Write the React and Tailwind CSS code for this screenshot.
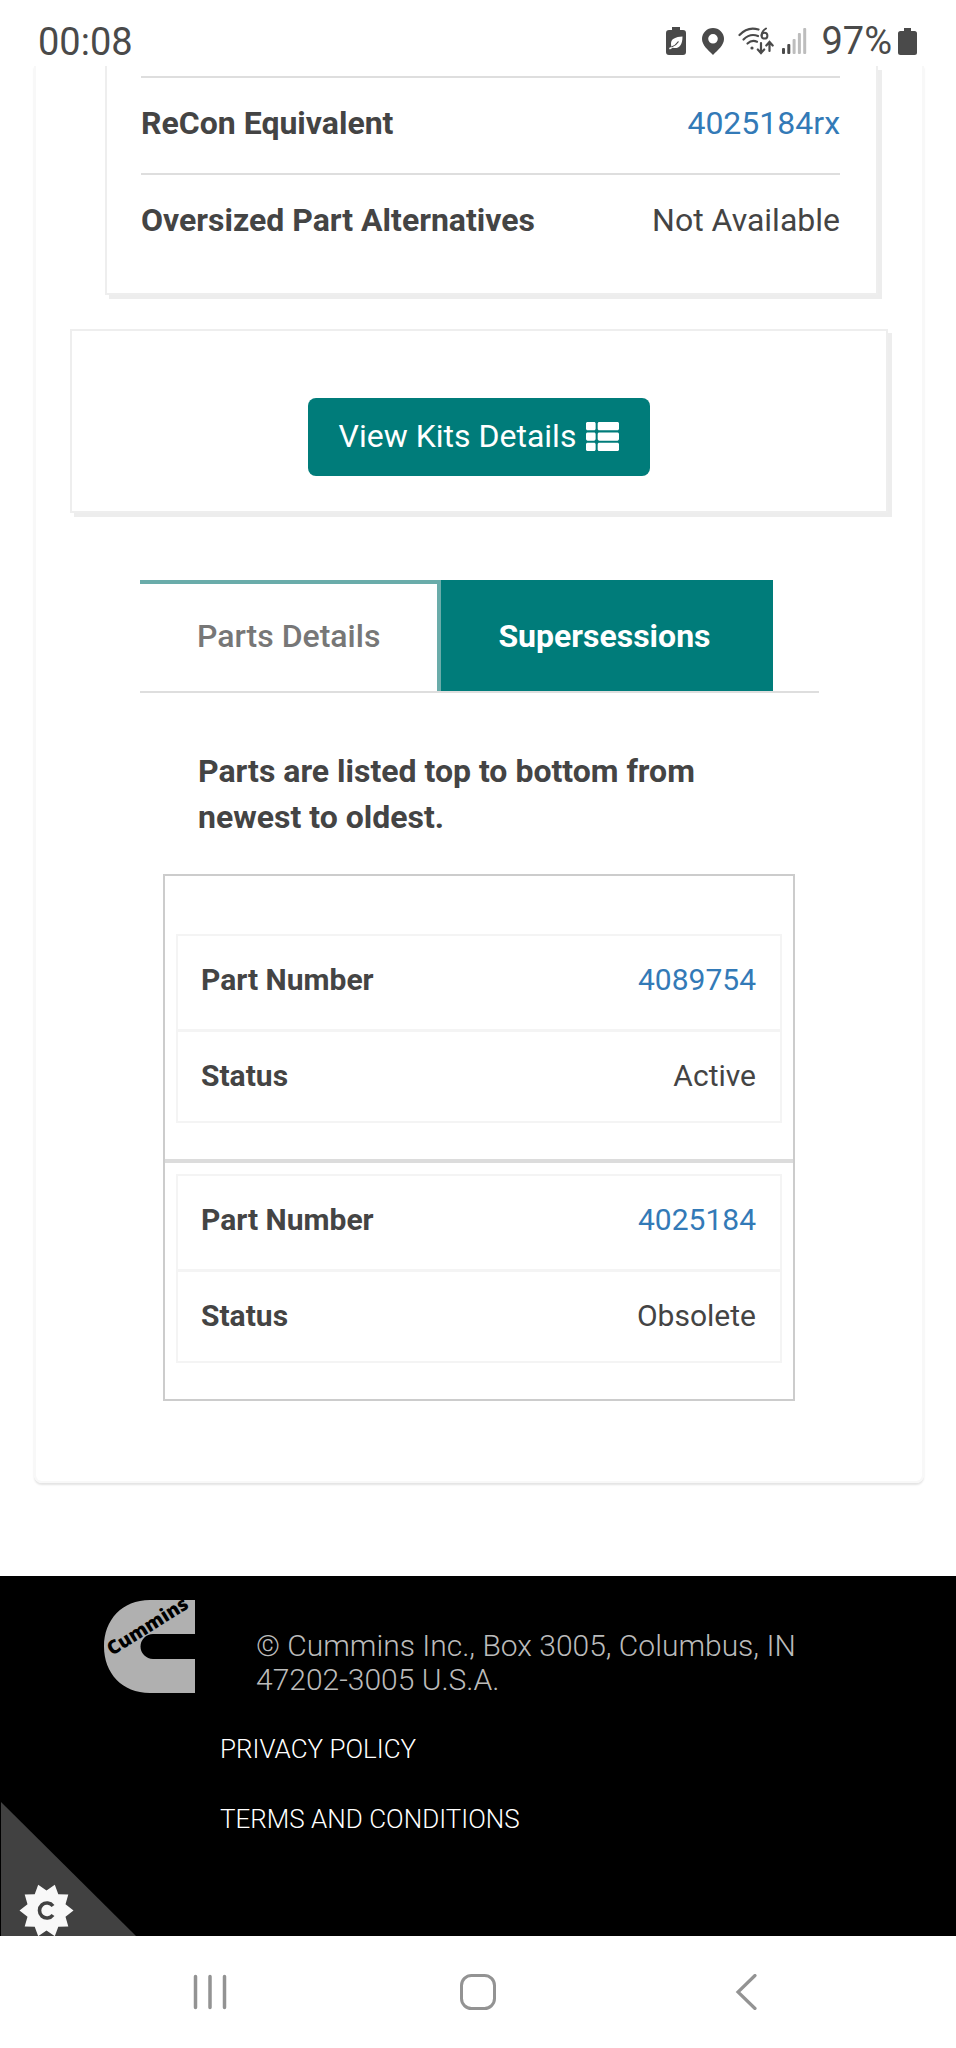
import React from "react";
import { FaThList } from "react-icons/fa";

const gearPoints = Array.from({ length: 20 }, (_, i) => {
  const radius = i % 2 === 0 ? 27 : 20;
  const angle = (i * Math.PI) / 10;
  return `${(27 + radius * Math.cos(angle)).toFixed(1)},${(27 + radius * Math.sin(angle)).toFixed(1)}`;
}).join(" ");

function EcoBatteryIcon() {
  return (
    <svg width="20" height="28" viewBox="0 0 20 28" aria-hidden="true">
      <path d="M6 0h8v3h3a3 3 0 0 1 3 3v19a3 3 0 0 1-3 3H3a3 3 0 0 1-3-3V6a3 3 0 0 1 3-3h3z" fill="#4a4a4a" />
      <path d="M16.500 9.500c-7 .5-11.500 2-11.500 7.500 0 1 .2 2 .6 2.700L3 21l.8 1.500 3-1.800c4.700 1.300 9.700-.7 9.700-11.200z" fill="#fff" />
      <path d="M5.500 20c3-1 5-2.500 7-5.500" fill="none" stroke="#4a4a4a" strokeWidth="1.300" />
    </svg>
  );
}

function PinIcon() {
  return (
    <svg width="22" height="27" viewBox="0 0 22 27" aria-hidden="true">
      <path
        fillRule="evenodd"
        d="M11 0a11 11 0 0 1 11 11c0 6-6 11-11 16C6 22 0 17 0 11A11 11 0 0 1 11 0zm0 6a4.800 4.800 0 1 0 0 9.600A4.800 4.800 0 0 0 11 6z"
        fill="#4a4a4a"
      />
    </svg>
  );
}

function WifiIcon() {
  return (
    <svg width="36" height="28" viewBox="0 0 36 28" fill="none" stroke="#4a4a4a" strokeWidth="2.200" strokeLinecap="round" aria-hidden="true">
      <path d="M1.500 8C7 2 14 .5 20.500 2.500" />
      <path d="M5.500 12.500C10 8 15 7 20 9" />
      <path d="M9.500 16.500c3-2.800 6.500-3.200 9.500-1.800" />
      <circle cx="14" cy="21" r="1.600" fill="#4a4a4a" stroke="none" />
      <circle cx="26.500" cy="8.700" r="2.900" strokeWidth="2" />
      <path d="M28 1.500C25.500 3 23.600 5.500 23.600 8.700" strokeWidth="2" />
      <path d="M23 16v9.500M19.800 22.500l3.200 3.500 3.200-3.500" />
      <path d="M31.500 24v-9M28.300 18.500l3.200-3.500 3.200 3.500" />
    </svg>
  );
}

function SignalIcon() {
  return (
    <svg width="25" height="26" viewBox="0 0 25 26" aria-hidden="true">
      <rect x="0" y="20" width="3" height="6" rx="1" fill="#4a4a4a" />
      <rect x="5.300" y="16" width="3" height="10" rx="1" fill="#4a4a4a" />
      <rect x="10.600" y="11" width="3" height="15" rx="1" fill="#bdbdbd" />
      <rect x="15.900" y="5" width="3" height="21" rx="1" fill="#bdbdbd" />
      <rect x="21.200" y="0" width="3" height="26" rx="1" fill="#bdbdbd" />
    </svg>
  );
}

function BatteryIcon() {
  return (
    <svg width="19" height="27" viewBox="0 0 19 27" aria-hidden="true">
      <path d="M6 0h7v3h3.500A2.500 2.500 0 0 1 19 5.500v19a2.500 2.500 0 0 1-2.500 2.500h-14A2.500 2.500 0 0 1 0 24.500v-19A2.500 2.500 0 0 1 2.500 3H6z" fill="#4a4a4a" />
    </svg>
  );
}

function StatusBar() {
  return (
    <header className="flex h-[66px] items-start justify-between pt-[21px] pr-[39px] pl-[38px] text-[38px] leading-[42px] text-[#4a4a4a]">
      <time>00:08</time>
      <div className="flex h-10 items-center">
        <EcoBatteryIcon />
        <span className="ml-4"><PinIcon /></span>
        <span className="ml-[14px]"><WifiIcon /></span>
        <span className="ml-2"><SignalIcon /></span>
        <span className="mr-[6px] ml-[14px]">97%</span>
        <BatteryIcon />
      </div>
    </header>
  );
}

function DetailRow({ label, children }) {
  return (
    <div className="flex justify-between border-t-2 border-[#dedede] pt-[23px] pb-7 leading-[44px]">
      <dt className="font-bold">{label}</dt>
      <dd>{children}</dd>
    </div>
  );
}

function PartTable({ number, status }) {
  return (
    <table className="w-full border-2 border-[#f4f4f4] text-[30px] leading-[36px]">
      <tbody>
        <tr className="border-b-3 border-[#f4f4f4]">
          <th scope="row" className="pt-[26px] pb-[31px] pl-[23px] text-left font-bold">Part Number</th>
          <td className="pt-[26px] pr-6 pb-[31px] text-right">
            <a href="#part" className="text-[#337ab7]">{number}</a>
          </td>
        </tr>
        <tr>
          <th scope="row" className="pt-[26px] pb-[27px] pl-[23px] text-left font-bold">Status</th>
          <td className="pt-[26px] pr-6 pb-[27px] text-right">{status}</td>
        </tr>
      </tbody>
    </table>
  );
}

function CumminsLogo() {
  return (
    <svg width="92" height="93" viewBox="0 0 92 93" role="img" aria-label="Cummins" className="shrink-0 overflow-visible">
      <path d="M91 0H46C18 0 0 20 0 46.500S18 93 46 93h45V59H49a12.500 12.500 0 0 1 0-25h42z" fill="#b0b0b0" />
      <text x="8" y="56" transform="rotate(-32 8 56)" fontFamily="Open Sans, sans-serif" fontWeight="800" fontSize="19" fill="#000">
        Cummins
      </text>
    </svg>
  );
}

function CookieSettings() {
  return (
    <button type="button" aria-label="Cookie settings" className="absolute bottom-0 left-0">
      <svg width="136" height="134" viewBox="0 0 136 134" aria-hidden="true">
        <path d="M1 0v134h135z" fill="#414141" />
        <g transform="translate(19.500 81.500)">
          <polygon points={gearPoints} fill="#f8f8f8" />
          <path d="M33.500 22.500A7.500 7.500 0 1 0 33.500 31.500" fill="none" stroke="#414141" strokeWidth="3.600" />
        </g>
      </svg>
    </button>
  );
}

export default function App() {
  return (
    <div className="flex min-h-screen flex-col bg-white font-[Roboto,sans-serif] text-[32px] text-[#444]">
      <StatusBar />

      <main className="mr-8 ml-[34px] rounded-b-lg border-x-2 border-b-2 border-[#f8f8f8] pb-20 shadow-[0_2px_2px_#e4e4e4]">
        <dl className="mr-[44px] ml-[69px] border-x-2 border-b-2 border-[#eee] pt-[10px] pr-9 pb-[23px] pl-[34px] shadow-[4px_4px_0_#ededed]">
          <DetailRow label="ReCon Equivalent">
            <a href="#recon" className="text-[#337ab7]">4025184rx</a>
          </DetailRow>
          <DetailRow label="Oversized Part Alternatives">Not Available</DetailRow>
        </dl>

        <section className="mx-[34px] mt-[34px] flex justify-center border-2 border-[#eee] pt-[67px] pb-[35px] shadow-[4px_4px_0_#ededed]">
          <button type="button" className="flex items-center gap-[10px] rounded-lg bg-[#007c7a] px-[31px] pt-[19px] pb-[21px] leading-[38px] text-white">
            View Kits Details
            <FaThList size={33} aria-hidden="true" />
          </button>
        </section>

        <div role="tablist" className="mr-[103px] ml-[104px] mt-[67px] flex border-b-2 border-[#dedede] leading-[38px]">
          <button type="button" role="tab" aria-selected="false" className="border-t-4 border-r-4 border-[#6aacaa] px-[57px] pt-[33px] pb-9 font-medium text-[#777]">
            Parts Details
          </button>
          <button type="button" role="tab" aria-selected="true" className="bg-[#007c7a] pr-[62px] pl-[57px] pt-[37px] pb-9 font-bold text-white">
            Supersessions
          </button>
        </div>

        <p className="mr-[190px] ml-[162px] pt-[55px] leading-[46px] font-bold">
          Parts are listed top to bottom from newest to oldest.
        </p>

        <div className="mx-[127px] mt-[34px] border-2 border-[#ccc]">
          <div className="px-[11px] pt-[58px] pb-9">
            <PartTable number="4089754" status="Active" />
          </div>
          <div className="border-t-4 border-[#dcdcdc] px-[11px] pt-[11px] pb-9">
            <PartTable number="4025184" status="Obsolete" />
          </div>
        </div>
      </main>

      <footer className="relative mt-[93px] bg-black pt-6 pb-[100px] font-light">
        <div className="flex gap-[60px] pr-[120px] pl-[104px]">
          <CumminsLogo />
          <p className="pt-[29px] text-[30px] leading-[34px] text-[#bbb]">
            © Cummins Inc., Box 3005, Columbus, IN 47202-3005 U.S.A.
          </p>
        </div>
        <nav className="flex flex-col items-start gap-9 pt-[35px] pl-[220px] text-[26px] leading-[34px] text-white">
          <a href="#privacy">PRIVACY POLICY</a>
          <a href="#terms">TERMS AND CONDITIONS</a>
        </nav>
        <CookieSettings />
      </footer>

      <nav className="flex items-start justify-between bg-white px-48 py-[38px]" aria-label="System navigation">
        <button type="button" aria-label="Recent apps">
          <svg width="36" height="36" viewBox="0 0 36 36" stroke="#939393" strokeWidth="3.500" strokeLinecap="round" aria-hidden="true">
            <path d="M3.500 2.500v31M18 2.500v31M32.500 2.500v31" />
          </svg>
        </button>
        <button type="button" aria-label="Home">
          <svg width="36" height="36" viewBox="0 0 36 36" fill="none" stroke="#939393" strokeWidth="3" aria-hidden="true">
            <rect x="1.500" y="1.500" width="33" height="33" rx="10" />
          </svg>
        </button>
        <button type="button" aria-label="Back">
          <svg width="36" height="36" viewBox="0 0 36 36" fill="none" stroke="#939393" strokeWidth="3.200" strokeLinecap="round" aria-hidden="true">
            <path d="M27 1.500L10 18l17 16.500" />
          </svg>
        </button>
      </nav>
    </div>
  );
}
